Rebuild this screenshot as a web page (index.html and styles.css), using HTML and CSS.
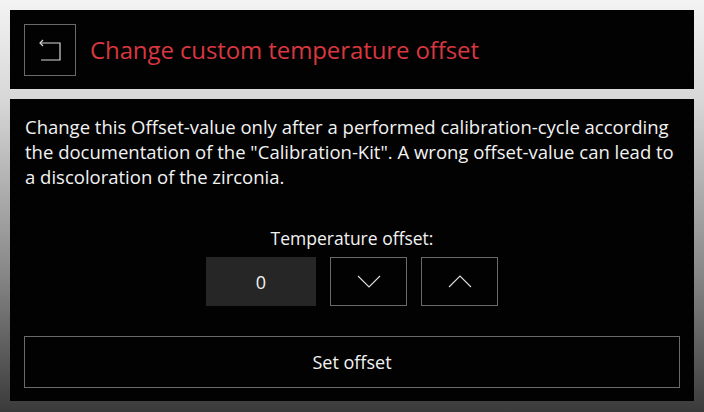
FILE: index.html
```html
<!DOCTYPE html>
<html>
<head>
<meta charset="utf-8">
<link rel="stylesheet" href="styles.css">
</head>
<body>
<div class="screen">
  <header class="header">
    <button class="back" aria-label="Back">
      <svg width="50" height="50" viewBox="0 0 50 50">
        <path d="M15 18 H35 V35 H16" fill="none" stroke="#d8d8d8" stroke-width="1.2"/>
        <path d="M18 15 L15 18 L18 21" fill="none" stroke="#d8d8d8" stroke-width="1.2"/>
      </svg>
    </button>
    <h1 class="title">Change custom temperature offset</h1>
  </header>
  <main class="panel">
    <p class="info">Change this Offset-value only after a performed calibration-cycle according the documentation of the "Calibration-Kit". A wrong offset-value can lead to a discoloration of the zirconia.</p>
    <div class="offset">
      <div class="label">Temperature offset:</div>
      <div class="controls">
        <div class="value">0</div>
        <button class="step" aria-label="Decrease">
          <svg width="24" height="13" viewBox="0 0 24 13"><path d="M1 1 L12 12 L23 1" fill="none" stroke="#e0e0e0" stroke-width="1.1"/></svg>
        </button>
        <button class="step" aria-label="Increase">
          <svg width="24" height="13" viewBox="0 0 24 13"><path d="M1 12 L12 1 L23 12" fill="none" stroke="#e0e0e0" stroke-width="1.1"/></svg>
        </button>
      </div>
    </div>
    <button class="set">Set offset</button>
  </main>
</div>
</body>
</html>
```
FILE: styles.css
```css
html, body {
  margin: 0;
  padding: 0;
}
body {
  width: 704px;
  height: 412px;
  overflow: hidden;
  background: linear-gradient(to bottom, #f3f3f3 0%, #d6d6d6 25%, #8a8a8a 65%, #3a3a3a 100%);
  font-family: "Open Sans", "Noto Sans", sans-serif;
  color: #f2f2f2;
}
.screen {
  padding: 10px 10px 11px 10px;
  display: flex;
  flex-direction: column;
  gap: 10px;
  height: 412px;
  box-sizing: border-box;
}
.header {
  height: 79px;
  background: #020202;
  display: flex;
  align-items: center;
  padding: 0 14px;
  gap: 14px;
  box-sizing: border-box;
}
.back {
  width: 52px;
  height: 52px;
  background: transparent;
  border: 1px solid #6a6a6a;
  padding: 0;
  margin: 0;
  display: flex;
  align-items: center;
  justify-content: center;
  box-sizing: border-box;
}
.title {
  margin: 0;
  font-weight: 400;
  font-size: 24px;
  color: #d8373f;
  letter-spacing: -0.1px;
}
.panel {
  flex: 1;
  background: #020202;
  display: flex;
  flex-direction: column;
  padding: 15px 14px 13px 14px;
  box-sizing: border-box;
}
.info {
  margin: 0;
  padding: 0 2px 0 1px;
  font-size: 18.5px;
  line-height: 25px;
}
.offset {
  margin-top: 38px;
  display: flex;
  flex-direction: column;
  align-items: center;
  gap: 8px;
}
.label {
  font-size: 17.5px;
  line-height: 22px;
}
.controls {
  display: flex;
  gap: 14px;
}
.value {
  width: 110px;
  height: 49px;
  background: #262626;
  display: flex;
  align-items: center;
  justify-content: center;
  font-size: 18px;
}
.step {
  width: 77px;
  height: 49px;
  background: transparent;
  border: 1px solid #6a6a6a;
  padding: 0;
  margin: 0;
  display: flex;
  align-items: center;
  justify-content: center;
}
.set {
  margin-top: auto;
  height: 52px;
  background: transparent;
  border: 1px solid #6a6a6a;
  color: #f2f2f2;
  font-family: inherit;
  font-size: 18px;
  padding: 0;
}
```
